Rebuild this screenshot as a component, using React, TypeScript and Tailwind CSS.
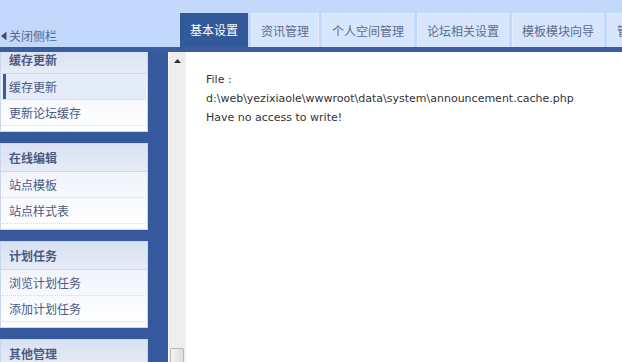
import React from "react";

const cjk = { fontFamily: '"Noto Sans CJK SC", "Noto Sans", sans-serif' };

function Panel({
  title,
  items,
  active,
  className = "",
}: {
  title: string;
  items: string[];
  active?: number;
  className?: string;
}) {
  return (
    <div
      className={`w-[148px] h-[87px] shrink-0 border border-[#c9d6ee] bg-gradient-to-b from-[#e9eef8] to-white ${className}`}
    >
      <div className="h-[28px] flex items-center pl-[8px] border-b border-[#cdd8ec] bg-gradient-to-b from-[#d9e2f2] to-[#e6ecf7] text-[12px] font-bold text-[#4d5a82]">
        {title}
      </div>
      {items.map((it, i) => (
        <div
          key={it}
          className={`h-[26px] flex items-stretch mx-[1px] border-b border-dotted border-[#d3dbe9] text-[12px] text-[#4a5a80] ${
            active === i ? "bg-[#e4ecf9]" : ""
          }`}
        >
          <div className={`w-[3px] ml-[1px] shrink-0 ${active === i ? "bg-[#3b5c9c]" : ""}`} />
          <div className="flex items-center pl-[3px]">{it}</div>
        </div>
      ))}
    </div>
  );
}

export default function App() {
  const tabs = ["基本设置", "资讯管理", "个人空间管理", "论坛相关设置", "模板模块向导", "管理员"];
  return (
    <div className="w-[622px] h-[362px] overflow-hidden bg-white flex flex-col" style={cjk}>
      <div className="h-[47px] shrink-0 bg-[#c3d9fb] flex items-end">
        <div className="w-[180px] shrink-0 h-full flex items-center pt-[24px] pl-[1px] text-[12px] text-[#56678f]">
          <svg width="6" height="8" viewBox="0 0 6 8" className="mr-[2px]">
            <polygon points="5,0 5,8 0,4" fill="#3c4d75" />
            <rect x="5" y="0" width="1" height="8" fill="#8797b8" />
          </svg>
          关闭侧栏
        </div>
        <div className="flex gap-[3px] items-end min-w-0 overflow-hidden">
          {tabs.map((t, i) => (
            <div
              key={t}
              className={`h-[34px] shrink-0 flex items-center text-[12px] whitespace-nowrap ${
                i === 0
                  ? "bg-[#34599b] text-white px-[10px]"
                  : "bg-[#d7e6fd] text-[#5d6c8c] px-[9px] border-x border-t border-[#e2ecfd]"
              }`}
            >
              {t}
            </div>
          ))}
        </div>
      </div>
      <div className="h-[5px] shrink-0 bg-[#3a5d9d]" />
      <div className="flex flex-1 min-h-0">
        <div className="w-[168px] shrink-0 bg-[#35599c] overflow-hidden flex flex-col gap-[11px]">
          <Panel title="缓存更新" items={["缓存更新", "更新论坛缓存"]} active={0} className="-mt-[7px]" />
          <Panel title="在线编辑" items={["站点模板", "站点样式表"]} />
          <Panel title="计划任务" items={["浏览计划任务", "添加计划任务"]} />
          <Panel title="其他管理" items={[]} />
        </div>
        <div className="w-[17px] shrink-0 bg-[#eeeeee] border-l border-[#f8f8f8] flex flex-col justify-between">
          <div className="h-[17px] flex items-center justify-center">
            <svg width="7" height="4" viewBox="0 0 7 4">
              <polygon points="3.5,0 7,4 0,4" fill="#333" />
            </svg>
          </div>
          <div className="h-[14px] mx-[1px] bg-gradient-to-r from-[#f4f4f4] to-[#dcdcdc] border border-[#b8b8b8] border-b-0 rounded-t-[2px]" />
        </div>
        <div
          className="flex-1 pl-[20px] pt-[18px] text-[11px] leading-[19px] text-[#333333] border-l border-[#f4f4f4]"
          style={{ fontFamily: '"DejaVu Sans", Verdana, sans-serif' }}
        >
          <div>File :</div>
          <div>d:\web\yezixiaole\wwwroot\data\system\announcement.cache.php</div>
          <div>Have no access to write!</div>
        </div>
      </div>
    </div>
  );
}
